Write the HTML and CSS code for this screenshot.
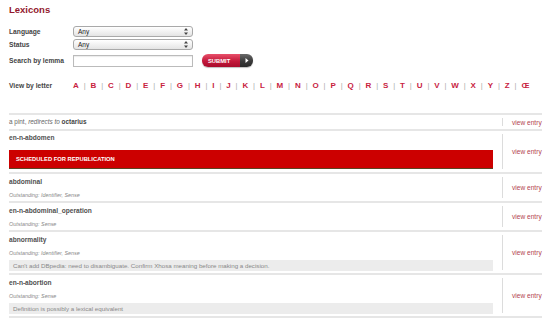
FILE: index.html
```html
<!DOCTYPE html>
<html>
<head>
<meta charset="utf-8">
<link rel="stylesheet" href="styles.css">
</head>
<body>
<div class="page">
  <h1 class="title">Lexicons</h1>
  <form class="filters">
    <div class="frow r1">
      <span class="label">Language</span>
      <span class="select"><span>Any</span><svg class="arrows" width="4" height="7" viewBox="0 0 4 7"><path d="M2 0L4 2.6H0Z M2 7L4 4.4H0Z" fill="#444"/></svg></span>
    </div>
    <div class="frow r2">
      <span class="label">Status</span>
      <span class="select"><span>Any</span><svg class="arrows" width="4" height="7" viewBox="0 0 4 7"><path d="M2 0L4 2.6H0Z M2 7L4 4.4H0Z" fill="#444"/></svg></span>
    </div>
    <div class="frow r3">
      <span class="label">Search by lemma</span>
      <span class="input"></span>
      <span class="submit"><span class="sub-text">SUBMIT</span><span class="sub-arrow"><svg width="4" height="5" viewBox="0 0 4 5"><path d="M0.5 0L3.5 2.5L0.5 5Z" fill="#fff"/></svg></span></span>
    </div>
    <div class="frow letters-row">
      <span class="label">View by letter</span>
      <span class="letters"><a>A</a><i>|</i><a>B</a><i>|</i><a>C</a><i>|</i><a>D</a><i>|</i><a>E</a><i>|</i><a>F</a><i>|</i><a>G</a><i>|</i><a>H</a><i>|</i><a>I</a><i>|</i><a>J</a><i>|</i><a>K</a><i>|</i><a>L</a><i>|</i><a>M</a><i>|</i><a>N</a><i>|</i><a>O</a><i>|</i><a>P</a><i>|</i><a>Q</a><i>|</i><a>R</a><i>|</i><a>S</a><i>|</i><a>T</a><i>|</i><a>U</a><i>|</i><a>V</a><i>|</i><a>W</a><i>|</i><a>X</a><i>|</i><a>Y</a><i>|</i><a>Z</a><i>|</i><a>Œ</a></span>
    </div>
  </form>

  <div class="list">
    <div class="entry e-a">
      <div class="main"><div class="redirect">a pint, <em>redirects to</em> <b>octarius</b></div></div>
      <div class="side"><span class="view">view entry</span></div>
    </div>
    <div class="entry e-b">
      <div class="main">
        <div class="name">en-n-abdomen</div>
        <div class="banner">SCHEDULED FOR REPUBLICATION</div>
      </div>
      <div class="side"><span class="view">view entry</span></div>
    </div>
    <div class="entry">
      <div class="main">
        <div class="name">abdominal</div>
        <div class="outst">Outstanding: Identifier, Sense</div>
      </div>
      <div class="side"><span class="view">view entry</span></div>
    </div>
    <div class="entry">
      <div class="main">
        <div class="name">en-n-abdominal_operation</div>
        <div class="outst">Outstanding: Sense</div>
      </div>
      <div class="side"><span class="view">view entry</span></div>
    </div>
    <div class="entry">
      <div class="main">
        <div class="name">abnormality</div>
        <div class="outst">Outstanding: Identifier, Sense</div>
        <div class="note">Can't add DBpedia: need to disambiguate. Confirm Xhosa meaning before making a decision.</div>
      </div>
      <div class="side"><span class="view">view entry</span></div>
    </div>
    <div class="entry">
      <div class="main">
        <div class="name">en-n-abortion</div>
        <div class="outst">Outstanding: Sense</div>
        <div class="note">Definition is possibly a lexical equivalent</div>
      </div>
      <div class="side"><span class="view">view entry</span></div>
    </div>
  </div>
</div>
</body>
</html>
```

FILE: styles.css
```css
* { box-sizing: border-box; }
html, body { margin: 0; padding: 0; background: #fff; }
body { font-family: "Liberation Sans", Arial, sans-serif; color: #555; }

.page { width: 542px; padding: 4px 0 0 9px; }

.title {
  margin: 0;
  font-size: 9.5px;
  line-height: 12px;
  font-weight: bold;
  color: #93192e;
}

.filters { margin: 10px 0 0; display: flex; flex-direction: column; }
.frow { display: flex; align-items: center; }
.r1 { height: 11px; }
.r2 { height: 11px; margin-top: 2px; }
.r3 { height: 13px; margin-top: 4px; }
.letters-row { height: 10px; margin-top: 13px; }

.label {
  width: 64px;
  flex: none;
  font-size: 6.7px;
  font-weight: bold;
  color: #444;
}

.select {
  width: 120px;
  height: 11px;
  border: 1px solid #a9a9a9;
  border-radius: 3px;
  background: linear-gradient(#ffffff, #e4e4e4);
  display: flex;
  align-items: center;
  justify-content: space-between;
  padding: 0 4px 0 4px;
  font-size: 6.5px;
  color: #222;
}
.arrows { display: block; }

.input {
  width: 120px;
  height: 12px;
  border: 1px solid #bbb;
  box-shadow: inset 0 1px 1px rgba(0,0,0,0.08);
  background: #fff;
}

.submit {
  margin-left: 9px;
  width: 51px;
  height: 13px;
  border-radius: 6px;
  display: flex;
  overflow: hidden;
  box-shadow: 0 1px 1px rgba(0,0,0,0.25);
}
.sub-text {
  flex: 1;
  background: linear-gradient(#e8506a, #c3183a 55%, #a80c2c);
  color: #fff;
  font-size: 5.8px;
  font-weight: bold;
  display: flex;
  align-items: center;
  padding-left: 6px;
}
.sub-arrow {
  width: 13px;
  background: linear-gradient(#6a6a6a, #3a3a3a 55%, #2a2a2a);
  display: flex;
  align-items: center;
  justify-content: center;
}
.sub-arrow svg { display: block; }

.letters { display: flex; align-items: center; font-size: 8px; font-weight: bold; }
.letters a { color: #c8233f; }
.letters i { font-style: normal; color: #aaa; margin: 0 4.9px; font-weight: normal; font-size: 7.5px; }

.list { margin-top: 23px; border-top: 2px solid #e6e6e6; }
.entry { display: flex; border-bottom: 2px solid #e6e6e6; }
.main { flex: none; width: 485px; margin-left: -1px; padding: 3px 0 2px 1px; }
.side {
  flex: 1;
  display: flex;
  align-items: center;
  padding: 3px 0 3px 9px;
}
.view {
  align-self: stretch;
  display: flex;
  align-items: center;
  border-left: 1px solid #dcdcdc;
  padding-left: 9px;
  font-size: 6.6px;
  color: #b3444f;
  white-space: nowrap;
}
.e-a .main { padding: 2px 0 2px 1px; }
.e-b .main { padding: 2px 0 3px 1px; }

.redirect { font-size: 6.4px; line-height: 10px; color: #666; }
.redirect b { color: #444; }

.name { font-size: 6.6px; line-height: 10px; font-weight: bold; color: #4f4f4f; }
.outst { margin-top: 4px; font-size: 5.4px; line-height: 8px; font-style: italic; color: #8a8a8a; }

.banner {
  margin-top: 7px;
  height: 19px;
  background: #cc0000;
  border-bottom: 1px solid #5b4423;
  color: #fff;
  font-size: 5.8px;
  font-weight: bold;
  display: flex;
  align-items: center;
  padding-left: 7px;
}

.note {
  margin-top: 3px;
  height: 11px;
  background: #ececec;
  font-size: 6.2px;
  line-height: 11px;
  color: #888;
  padding-left: 4px;
  white-space: nowrap;
  overflow: hidden;
}
```
